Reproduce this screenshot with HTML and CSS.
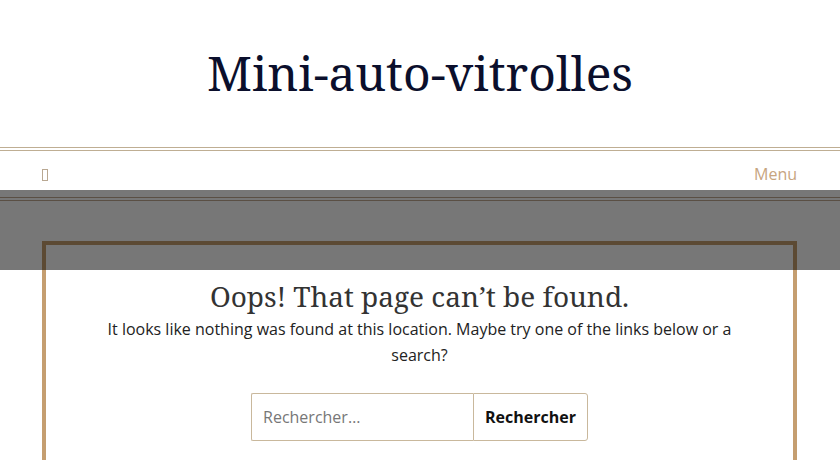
FILE: index.html
```html
<!DOCTYPE html>
<html lang="fr">
<head>
<meta charset="utf-8">
<title>Mini-auto-vitrolles</title>
<link rel="stylesheet" href="styles.css">
</head>
<body>
<header class="site-header">
  <div class="branding">
    <p class="site-title">Mini-auto-vitrolles</p>
  </div>
  <div class="double-line"></div>
  <nav class="main-nav">
    <span class="nav-icon" aria-hidden="true"></span>
    <span class="menu-toggle">Menu</span>
  </nav>
</header>
<main class="site-main">
  <div class="double-line dark"></div>
  <section class="not-found">
    <h1 class="page-title">Oops! That page can’t be found.</h1>
    <p class="lead">It looks like nothing was found at this location. Maybe try one of the links below or a search?</p>
    <form class="search-form">
      <input class="search-field" type="search" placeholder="Rechercher…">
      <button class="search-submit" type="button">Rechercher</button>
    </form>
  </section>
</main>
<div class="overlay"></div>
</body>
</html>
```

FILE: styles.css
```css
html, body {
  margin: 0;
  padding: 0;
  background: #ffffff;
}
body {
  font-family: "Open Sans", "Liberation Sans", sans-serif;
  color: #222222;
  font-size: 16px;
  overflow: hidden;
}
.branding {
  height: 147px;
  display: flex;
  align-items: center;
  justify-content: center;
}
.site-title {
  margin: 0;
  font-family: "Noto Serif", "DejaVu Serif", serif;
  font-size: 48px;
  line-height: 1.2;
  color: #0b0f2c;
  padding-bottom: 2px;
}
.double-line {
  height: 2px;
  border-top: 1px solid #bfae93;
  border-bottom: 1px solid #bfae93;
}
.double-line.dark {
  border-color: #c1aa92;
  margin-top: 7px;
}
.main-nav {
  height: 39px;
  display: flex;
  align-items: center;
  justify-content: space-between;
  padding: 0 43px 0 42px;
}
.nav-icon {
  display: inline-block;
  width: 4px;
  height: 10px;
  border: 1px solid #b9a892;
  margin-top: 8px;
}
.menu-toggle {
  color: #c7a57f;
  font-size: 16px;
  margin-top: 6px;
}
.site-main {
  padding: 0;
}
.not-found {
  margin: 40px 43px 0 42px;
  border: 4px solid #c59e70;
  border-bottom: none;
  padding: 33px 50px 40px;
  text-align: center;
  min-height: 300px;
}
.page-title {
  margin: 0;
  font-family: "Noto Serif", "DejaVu Serif", serif;
  font-weight: 400;
  font-size: 28px;
  line-height: 1.3;
  color: #333333;
}
.lead {
  margin: 2px 0 0;
  line-height: 26px;
  color: #222222;
}
.search-form {
  display: flex;
  justify-content: center;
  margin-top: 25px;
}
.search-field {
  width: 222px;
  height: 48px;
  box-sizing: border-box;
  border: 1px solid #c9b89c;
  border-right: none;
  padding: 0 11px;
  font-family: "Open Sans", "Liberation Sans", sans-serif;
  font-size: 16px;
  color: #333;
  border-radius: 2px 0 0 2px;
  outline: none;
}
.search-field::placeholder {
  color: #777777;
}
.search-submit {
  height: 48px;
  box-sizing: border-box;
  border: 1px solid #c9b89c;
  background: #ffffff;
  padding: 0 11px;
  font-family: "Open Sans", "Liberation Sans", sans-serif;
  font-size: 16px;
  font-weight: 700;
  color: #111111;
  border-radius: 0 3px 3px 0;
}
.overlay {
  position: absolute;
  left: 0;
  right: 0;
  top: 190px;
  height: 80px;
  background: rgba(0, 0, 0, 0.535);
}
```
